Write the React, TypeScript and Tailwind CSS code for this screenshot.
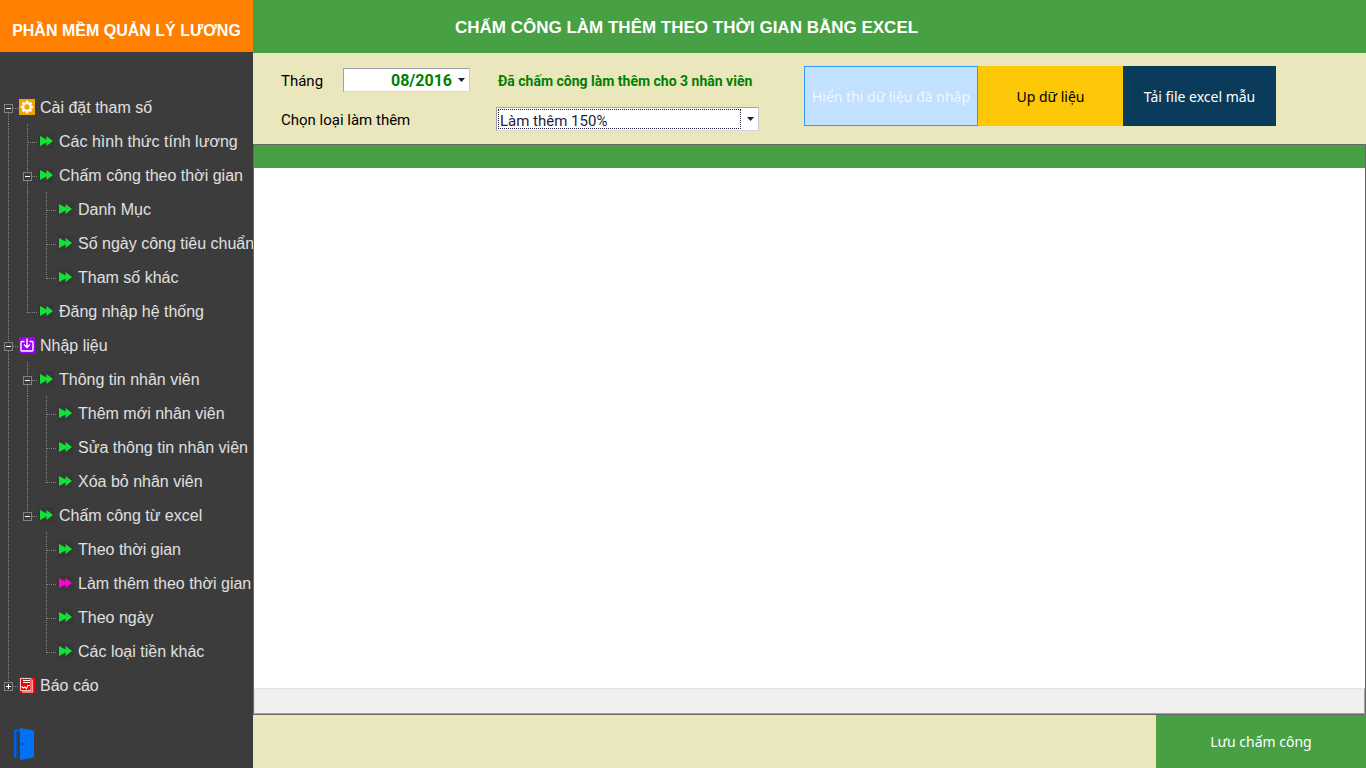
import React from "react";

type Connector = "none" | "line" | "branch" | "last" | "open-first" | "open" | "open-last" | "closed-last";
type IconName = "gear" | "import" | "report" | "arrow" | "arrow-active";

interface TreeRow {
  label: string;
  icon: IconName;
  cells: Connector[];
}

const ROWS: TreeRow[] = [
  { label: "Cài đặt tham số", icon: "gear", cells: ["open-first"] },
  { label: "Các hình thức tính lương", icon: "arrow", cells: ["line", "branch"] },
  { label: "Chấm công theo thời gian", icon: "arrow", cells: ["line", "open"] },
  { label: "Danh Mục", icon: "arrow", cells: ["line", "line", "branch"] },
  { label: "Số ngày công tiêu chuẩn", icon: "arrow", cells: ["line", "line", "branch"] },
  { label: "Tham số khác", icon: "arrow", cells: ["line", "line", "last"] },
  { label: "Đăng nhập hệ thống", icon: "arrow", cells: ["line", "last"] },
  { label: "Nhập liệu", icon: "import", cells: ["open"] },
  { label: "Thông tin nhân viên", icon: "arrow", cells: ["line", "open"] },
  { label: "Thêm mới nhân viên", icon: "arrow", cells: ["line", "line", "branch"] },
  { label: "Sửa thông tin nhân viên", icon: "arrow", cells: ["line", "line", "branch"] },
  { label: "Xóa bỏ nhân viên", icon: "arrow", cells: ["line", "line", "last"] },
  { label: "Chấm công từ excel", icon: "arrow", cells: ["line", "open-last"] },
  { label: "Theo thời gian", icon: "arrow", cells: ["line", "none", "branch"] },
  { label: "Làm thêm theo thời gian", icon: "arrow-active", cells: ["line", "none", "branch"] },
  { label: "Theo ngày", icon: "arrow", cells: ["line", "none", "branch"] },
  { label: "Các loại tiền khác", icon: "arrow", cells: ["line", "none", "last"] },
  { label: "Báo cáo", icon: "report", cells: ["closed-last"] },
];

const V_DOTS = "w-px bg-[repeating-linear-gradient(to_bottom,#858585_0_1px,transparent_1px_2px)]";
const H_DOTS = "mt-[18px] h-px flex-1 bg-[repeating-linear-gradient(to_right,#858585_0_1px,transparent_1px_2px)]";

function TreeCell({ kind }: { kind: Connector }) {
  if (kind === "none") return <span className="w-[19px] shrink-0" />;

  if (kind === "line" || kind === "branch" || kind === "last") {
    return (
      <span className="flex w-[19px] shrink-0 pl-2">
        <span className={`${V_DOTS} ${kind === "last" ? "h-[19px]" : "h-full"}`} />
        {kind !== "line" && <span className={H_DOTS} />}
      </span>
    );
  }

  const closed = kind === "closed-last";
  return (
    <span className="flex w-[19px] shrink-0 pl-1">
      <span className="flex w-[9px] flex-col items-center">
        <span className={kind === "open-first" ? "h-[14px]" : `h-[14px] ${V_DOTS}`} />
        <svg viewBox="0 0 9 9" className="h-[9px] w-[9px] shrink-0" shapeRendering="crispEdges" aria-hidden="true">
          <rect x="0.5" y="0.5" width="8" height="8" fill="#3c3c3c" stroke="#828282" />
          <path d="M2 4h5v1H2z" fill="#fff" />
          {closed && <path d="M4 2h1v5H4z" fill="#fff" />}
        </svg>
        {(kind === "open" || kind === "open-first") && <span className={`flex-1 ${V_DOTS}`} />}
      </span>
      <span className={H_DOTS} />
    </span>
  );
}

function TreeIcon({ name }: { name: IconName }) {
  if (name === "gear") {
    return (
      <svg viewBox="0 0 16 16" className="h-4 w-4 shrink-0" aria-hidden="true">
        <rect width="16" height="16" fill="#f4a300" />
        <g stroke="#fff" strokeWidth="2.6">
          <path d="M8 1.800v12.400M1.800 8h12.400M3.600 3.600l8.800 8.800M12.400 3.600l-8.800 8.800" />
        </g>
        <circle cx="8" cy="8" r="4.8" fill="#fff" />
        <circle cx="8" cy="8" r="2.7" fill="#f4a300" />
      </svg>
    );
  }
  if (name === "import") {
    return (
      <svg viewBox="0 0 16 16" className="h-4 w-4 shrink-0" aria-hidden="true">
        <rect width="16" height="16" fill="#9e00f5" />
        <path d="M5.5 4.5H3q-1 0-1 1v7.500q0 1 1 1h10q1 0 1-1V5.500q0-1-1-1h-2.500" fill="none" stroke="#fff" strokeWidth="1.3" />
        <path d="M8 1.500v9M5 7.600l3 3 3-3" fill="none" stroke="#fff" strokeWidth="1.4" />
      </svg>
    );
  }
  if (name === "report") {
    return (
      <svg viewBox="0 0 16 16" className="h-4 w-4 shrink-0" aria-hidden="true">
        <rect width="16" height="16" fill="#f00000" />
        <path d="M1.500 1.500h10.500v12H1.500z" fill="none" stroke="#ffc4c4" strokeWidth="1" />
        <path d="M13.500 2.500v12.500H3" fill="none" stroke="#ff9c9c" strokeWidth="1.300" />
        <path d="M4 3.500h7M4 5.500h7" stroke="#fff" strokeWidth="1" />
        <path d="M2.500 9.500l2 1.500 1.500-1 1.500 1.500 1.500-3 2 0" fill="none" stroke="#fff" strokeWidth="1.200" />
      </svg>
    );
  }
  return (
    <svg viewBox="0 0 16 16" className="h-4 w-4 shrink-0" aria-hidden="true">
      <rect width="16" height="16" fill="#383838" />
      <path d="M2 3l6.500 3.600V3L15 8l-6.500 5V9.400L2 13z" fill={name === "arrow" ? "#12e236" : "#f507d0"} />
    </svg>
  );
}

function Caret() {
  return (
    <svg viewBox="0 0 7 4" className="h-1 w-[7px]" aria-hidden="true">
      <path d="M0 0h7L3.500 4z" fill="#1e1e2e" />
    </svg>
  );
}

function Sidebar() {
  return (
    <aside className="flex w-[253px] shrink-0 flex-col overflow-hidden bg-[#3c3c3c]">
      <div className="flex h-[52px] items-center justify-center bg-[#ff8000] pt-2.5 font-['Liberation_Sans',sans-serif] text-base font-bold whitespace-nowrap text-white">
        PHẦN MỀM QUẢN LÝ LƯƠNG
      </div>
      <nav className="mt-[38px]">
        <ul>
          {ROWS.map((row) => (
            <li key={row.label}>
              <button type="button" className="flex h-[34px] w-full text-left">
                {row.cells.map((kind, i) => (
                  <TreeCell key={i} kind={kind} />
                ))}
                <span className="flex h-[34px] items-center gap-[5px] font-['Liberation_Sans',sans-serif] text-base whitespace-nowrap text-[#e0e0e0]">
                  <TreeIcon name={row.icon} />
                  <span className="pt-0.5">{row.label}</span>
                </span>
              </button>
            </li>
          ))}
        </ul>
      </nav>
      <button type="button" aria-label="Thoát" className="mt-auto mb-2 ml-[14px] h-8 w-5">
        <svg viewBox="0 0 20 32" className="h-8 w-5" aria-hidden="true">
          <path d="M0 1.500h6v1.500H3v26.500H0z" fill="#0552b5" />
          <path d="M1 2.500h5M1 2.500v27" stroke="#0070f5" strokeWidth="1" fill="none" />
          <path d="M6 0l14 2.500v27L6 32z" fill="#0070f5" />
          <circle cx="8.500" cy="16" r="1" fill="#143a66" />
        </svg>
      </button>
    </aside>
  );
}

function Toolbar() {
  return (
    <form className="flex h-[91px] shrink-0 bg-[#ebe7bd] pl-7 font-['Roboto',sans-serif] text-[15px] text-black" onSubmit={(e) => e.preventDefault()}>
      <div className="flex w-[523px] shrink-0 flex-col gap-[15px] pt-[15px]">
        <div className="flex h-6 items-center">
          <label htmlFor="month" className="w-[62px] pt-0.5">Tháng</label>
          <div className="flex h-6 w-[127px] items-center border border-t-[#a0a0a8] border-r-[#c8c8d8] border-b-[#d8d8e4] border-l-[#a0a0a8] bg-white">
            <input id="month" defaultValue="08/2016" className="w-full min-w-0 flex-1 pt-0.5 text-right text-base font-bold text-[#008000] outline-none" />
            <button type="button" aria-label="Chọn tháng" className="flex h-full w-[17px] items-center justify-end pr-1">
              <Caret />
            </button>
          </div>
          <p className="ml-7 pt-0.5 text-sm font-bold whitespace-nowrap text-[#008000]">Đã chấm công làm thêm cho 3 nhân viên</p>
        </div>
        <div className="flex h-6 items-center">
          <label htmlFor="kind" className="w-[215px] pt-0.5">Chọn loại làm thêm</label>
          <div className="flex h-6 w-[263px] items-center border border-t-[#a0a0a8] border-r-[#c8c8d8] border-b-[#d8d8e4] border-l-[#a0a0a8] bg-white pl-px">
            <select id="kind" className="h-5 min-w-0 flex-1 appearance-none border border-dotted border-[#1e1e2e] pb-0.5 pl-px text-[#1e1e3c] outline-none">
              <option>Làm thêm 150%</option>
            </select>
            <span className="pointer-events-none flex w-[17px] justify-end pr-1">
              <Caret />
            </span>
          </div>
        </div>
      </div>
      <div className="flex pt-[13px] font-['Noto_Sans',sans-serif] text-sm whitespace-nowrap">
        <button type="button" className="h-[60px] w-[174px] border border-[#3399ff] bg-[#c2e0ff] pt-0.5 text-[#f0f7ff]">Hiển thị dữ liệu đã nhập</button>
        <button type="button" className="h-[60px] w-[145px] bg-[#fcc707] pt-0.5">Up dữ liệu</button>
        <button type="button" className="h-[60px] w-[153px] bg-[#0b3b5b] pt-0.5 text-white">Tải file excel mẫu</button>
      </div>
    </form>
  );
}

export default function App() {
  return (
    <div className="flex min-h-screen bg-[#ebe7bd]">
      <Sidebar />
      <main className="flex min-w-0 flex-1 flex-col">
        <h1 className="flex h-[53px] shrink-0 items-center bg-[#48a044] pt-0.5 pl-[202px] font-['Liberation_Sans',sans-serif] text-[17px] font-bold whitespace-nowrap text-white">
          CHẤM CÔNG LÀM THÊM THEO THỜI GIAN BẰNG EXCEL
        </h1>
        <Toolbar />
        <section className="flex flex-1 flex-col border border-[#696969] bg-white">
          <div className="h-[23px] bg-[#48a044]" />
          <div className="flex-1" />
          <div className="h-[26px] border border-t-[#e3e3e3] border-r-[#a0a0a0] border-b-[#a0a0a0] border-l-[#e3e3e3] bg-[#f0f0f0]" />
        </section>
        <footer className="flex h-[53px] shrink-0 justify-end">
          <button type="button" className="w-[210px] bg-[#48a044] font-['Noto_Sans',sans-serif] text-sm text-white">
            Lưu chấm công
          </button>
        </footer>
      </main>
    </div>
  );
}
